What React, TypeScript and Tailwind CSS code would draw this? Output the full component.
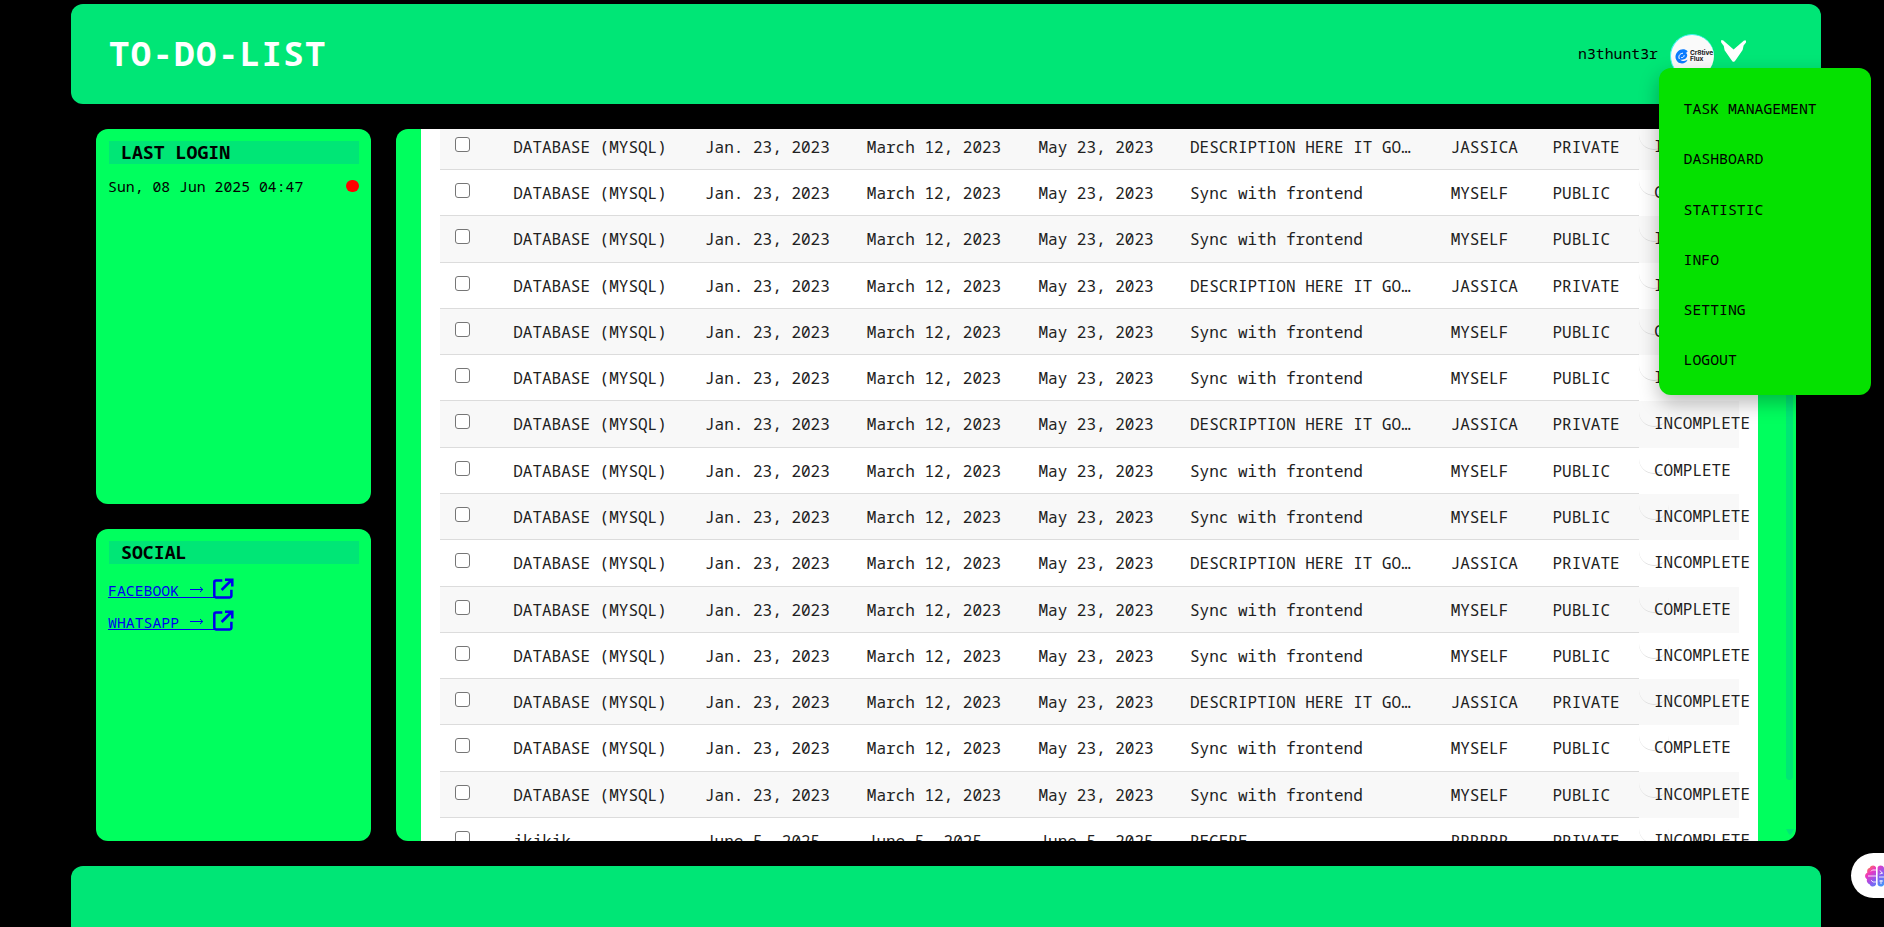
import type { ReactNode } from "react";

type Task = {
  name: string;
  created: string;
  start: string;
  due: string;
  description: string;
  owner: string;
  privacy: string;
  status: string;
};

const base = { name: "DATABASE (MYSQL)", created: "Jan. 23, 2023", start: "March 12, 2023", due: "May 23, 2023" };
const jassica: Task = { ...base, description: "DESCRIPTION HERE IT GO…", owner: "JASSICA", privacy: "PRIVATE", status: "INCOMPLETE" };
const done: Task = { ...base, description: "Sync with frontend", owner: "MYSELF", privacy: "PUBLIC", status: "COMPLETE" };
const open: Task = { ...done, status: "INCOMPLETE" };

const tasks: Task[] = [
  ...Array.from({ length: 5 }).flatMap(() => [jassica, done, open]),
  {
    name: "jkjkjk",
    created: "June 5, 2025",
    start: "June 5, 2025",
    due: "June 5, 2025",
    description: "REGERE",
    owner: "RRRRRR",
    privacy: "PRIVATE",
    status: "INCOMPLETE",
  },
];

const menu = ["TASK MANAGEMENT", "DASHBOARD", "STATISTIC", "INFO", "SETTING", "LOGOUT"];

function ExternalIcon() {
  return (
    <svg className="ml-[-1px] h-[21px] w-[21px] shrink-0" viewBox="0 0 21 21" fill="none" stroke="#0000ee" strokeWidth="2.5">
      <path d="M9.3 2.6H3Q1.3 2.6 1.3 4.2V17.6Q1.3 19.4 3 19.4H16.8Q18.4 19.4 18.4 17.6V11.8" />
      <path d="M8.6 12L18.6 2" />
      <path d="M12 1.7H19.3V8.5" />
      <path d="M14.6 1H20V6.4Z" fill="#0000ee" stroke="none" />
    </svg>
  );
}

function Avatar() {
  return (
    <div className="flex h-11 w-11 items-center gap-[2px] overflow-hidden rounded-full border-t border-l border-[#3ff5ef] bg-[#fafafa] pl-1">
      <svg className="h-[15px] w-[13px] shrink-0" viewBox="0 0 13 15">
        <path d="M12.6 2.2C9.8 -.6 5.4 -.2 2.8 2.4C-.4 5.6 -.2 10.4 2.8 13C5.8 15.4 10.6 15 12.6 10.8C10.2 12.4 6.8 12.4 5.2 10.4C8.8 11.4 12.2 9.2 12.2 6.2C12.2 5 11.6 4.2 10.4 4C11.6 3.6 12.4 3 12.6 2.2Z" fill="#0a7cff" />
        <path d="M4.4 10C3 7.4 4.6 4.4 8 4.2M6.2 8.6C7.8 8.8 9.2 7.8 9.2 6.2" fill="none" stroke="#fff" strokeWidth="1" />
      </svg>
      <div className="font-['Inter',sans-serif] text-[6.6px] leading-[6px] font-bold tracking-[-0.1px] text-[#222]">
        Cr8tive
        <br />
        Flux
      </div>
    </div>
  );
}

function Brain() {
  return (
    <svg className="h-[22px] w-[24px] shrink-0" viewBox="0 0 24 22">
      <defs>
        <linearGradient id="brain" x1="0" y1="0" x2="1" y2="1">
          <stop offset="0" stopColor="#ff9d1e" />
          <stop offset=".28" stopColor="#ee35c0" />
          <stop offset=".55" stopColor="#8a5cf0" />
          <stop offset="1" stopColor="#22b4ff" />
        </linearGradient>
      </defs>
      <path
        fill="url(#brain)"
        d="M11 2.4C10.2 -.2 5.8 -.4 4.8 2.8C2.6 3.2 1.6 5.6 2.4 7.6C-.6 9 -.6 13 2 14.2C1.2 16.4 2.6 18.6 4.6 19.2C5.6 22.2 10 22.4 11 19.6ZM12.6 2.4C13.4 -.2 18 -.4 19 2.8C21.2 3.4 22.2 5.6 21.4 7.6C24.4 9 24.4 13 21.8 14.2C22.6 16.4 21.2 18.6 19.2 19.2C18.2 22.2 13.6 22.4 12.6 19.6Z"
      />
      <path d="M11 5H7.4L6 6.4M3 11H11M6 15.2L8 17H11M15 5.4L17 8M14.6 9L18 8M14.4 16H18M16 15V19M19 12H14" fill="none" stroke="#fff" strokeOpacity=".85" strokeWidth="1" />
    </svg>
  );
}

function Card({ title, className, children }: { title: string; className: string; children: ReactNode }) {
  return (
    <section className={`rounded-xl bg-[#00ff5e] px-[13px] pt-3 ${className}`}>
      <h2 className="mr-[-1px] h-[23px] bg-[#00e676] pl-3 text-[18.2px] leading-[23px] font-bold">{title}</h2>
      {children}
    </section>
  );
}

function Row({ task, striped }: { task: Task; striped: boolean }) {
  return (
    <div className="flex h-[46.29px] text-base leading-6 whitespace-nowrap text-[#212121]">
      <div
        className={`grid w-[1199px] grid-cols-[73.2px_191.8px_161.8px_171.7px_151.5px_260.7px_101.8px_86.5px] border-b border-[#dcdcdc] pt-[11px] ${striped ? "bg-[#f8f8f8]" : "bg-white"}`}
      >
        <div className="pt-[2px] pl-[15px]">
          <div className="h-[15px] w-[15px] rounded-[3px] border border-[#767676] bg-white" />
        </div>
        <div>{task.name}</div>
        <div>{task.created}</div>
        <div>{task.start}</div>
        <div>{task.due}</div>
        <div>{task.description}</div>
        <div>{task.owner}</div>
        <div>{task.privacy}</div>
      </div>
      <div className={`relative w-[100px] pt-[10px] pl-[15px] ${striped ? "bg-[#f8f8f8]" : "bg-white"}`}>
        <div className="absolute top-[-4px] left-0 h-[30px] w-[30px] rounded-full border-b border-[#dcdcdc]" />
        <span className="relative">{task.status}</span>
      </div>
    </div>
  );
}

export default function App() {
  return (
    <div className="relative flex h-[927px] w-[1884px] flex-col gap-[25px] overflow-hidden bg-black pt-1 pr-[63px] pl-[71px] font-['Noto_Sans_Mono','DejaVu_Sans_Mono',monospace] text-[14.8px] text-black">
      <header className="flex h-[100px] shrink-0 items-center rounded-xl bg-[#00e676] pr-[75px] pl-[38px]">
        <h1 className="mb-[2px] text-[34px] leading-[44px] font-bold tracking-[1.38px] text-white">TO-DO-LIST</h1>
        <div className="ml-auto flex items-start">
          <span className="mt-[12px] leading-5">n3thunt3r</span>
          <div className="ml-3 pt-[3px]">
            <Avatar />
          </div>
          <svg className="mt-[9px] ml-[7px] h-[22px] w-[25px]" viewBox="0 0 25 22" fill="#fff">
            <path d="M0 .3H2L12.6 9.6L23 .6L25 .6V2.4L22.6 5.6L21.6 10L14.4 20.4L13.2 21.8H11.8L10.4 20L3.6 10.2L2.8 6L.2 2.6Z" />
          </svg>
        </div>
      </header>

      <div className="flex h-[712px] shrink-0 gap-[25px] px-[25px]">
        <aside className="flex w-[275px] flex-col gap-[25px]">
          <Card title="LAST LOGIN" className="h-[375px]">
            <div className="mt-[11px] mr-[-1px] ml-[-1px] flex items-center justify-between leading-[22px]">
              <span>Sun, 08 Jun 2025 04:47</span>
              <span className="h-3 w-[13px] rounded-full bg-[#ff0000]" />
            </div>
          </Card>
          <Card title="SOCIAL" className="h-[312px]">
            <div className="mt-[14px] ml-[-1px] flex flex-col gap-[11px] text-[#0000ee]">
              {["FACEBOOK", "WHATSAPP"].map((label) => (
                <a key={label} href="#" className="flex h-[21px] items-start">
                  <span className="mt-[5px] flex h-[15px] w-[106px] items-end border-b border-[#0000ee] whitespace-pre">
                    <span className="leading-[13px]">{label}</span>
                    <svg className="mb-[4px] ml-[11px] h-[7px] w-[14px]" viewBox="0 0 14 7" fill="none" stroke="#0000ee">
                      <path d="M0 3.5H12.5M10 1L12.8 3.5L10 6" />
                    </svg>
                  </span>
                  <ExternalIcon />
                </a>
              ))}
            </div>
          </Card>
        </aside>

        <main className="relative w-[1400px] overflow-hidden rounded-xl bg-[#00ff5e] pl-[25px]">
          <div className="flow-root h-full w-[1337px] bg-white pl-[19px]">
            <div className="mt-[-5.3px]">
              {tasks.map((task, i) => (
                <Row key={i} task={task} striped={i % 2 === 0} />
              ))}
            </div>
          </div>
          <div className="absolute top-0 right-[3px] h-[651px] w-[7px] rounded-full bg-[#00e676]" />
          <svg className="absolute right-[2px] bottom-[6px] h-[6px] w-[8px]" viewBox="0 0 8 6" fill="#00e676">
            <path d="M0 0H8L5 5.4H3Z" />
          </svg>
        </main>
      </div>

      <footer className="h-[100px] shrink-0 rounded-xl bg-[#00e676]" />

      <nav className="absolute top-[68px] left-[1659px] flex h-[327px] w-[212px] flex-col rounded-xl bg-[#05e100] pt-[15px] pl-[24.5px] shadow-[0_8px_20px_rgba(0,0,0,0.28)]">
        {menu.map((item) => (
          <a key={item} href="#" className="h-[50.3px] leading-[50px]">
            {item}
          </a>
        ))}
      </nav>

      <div className="absolute top-[853px] left-[1851px] flex h-[45px] w-[60px] items-center rounded-l-full bg-white pl-[14px]">
        <Brain />
      </div>
    </div>
  );
}
